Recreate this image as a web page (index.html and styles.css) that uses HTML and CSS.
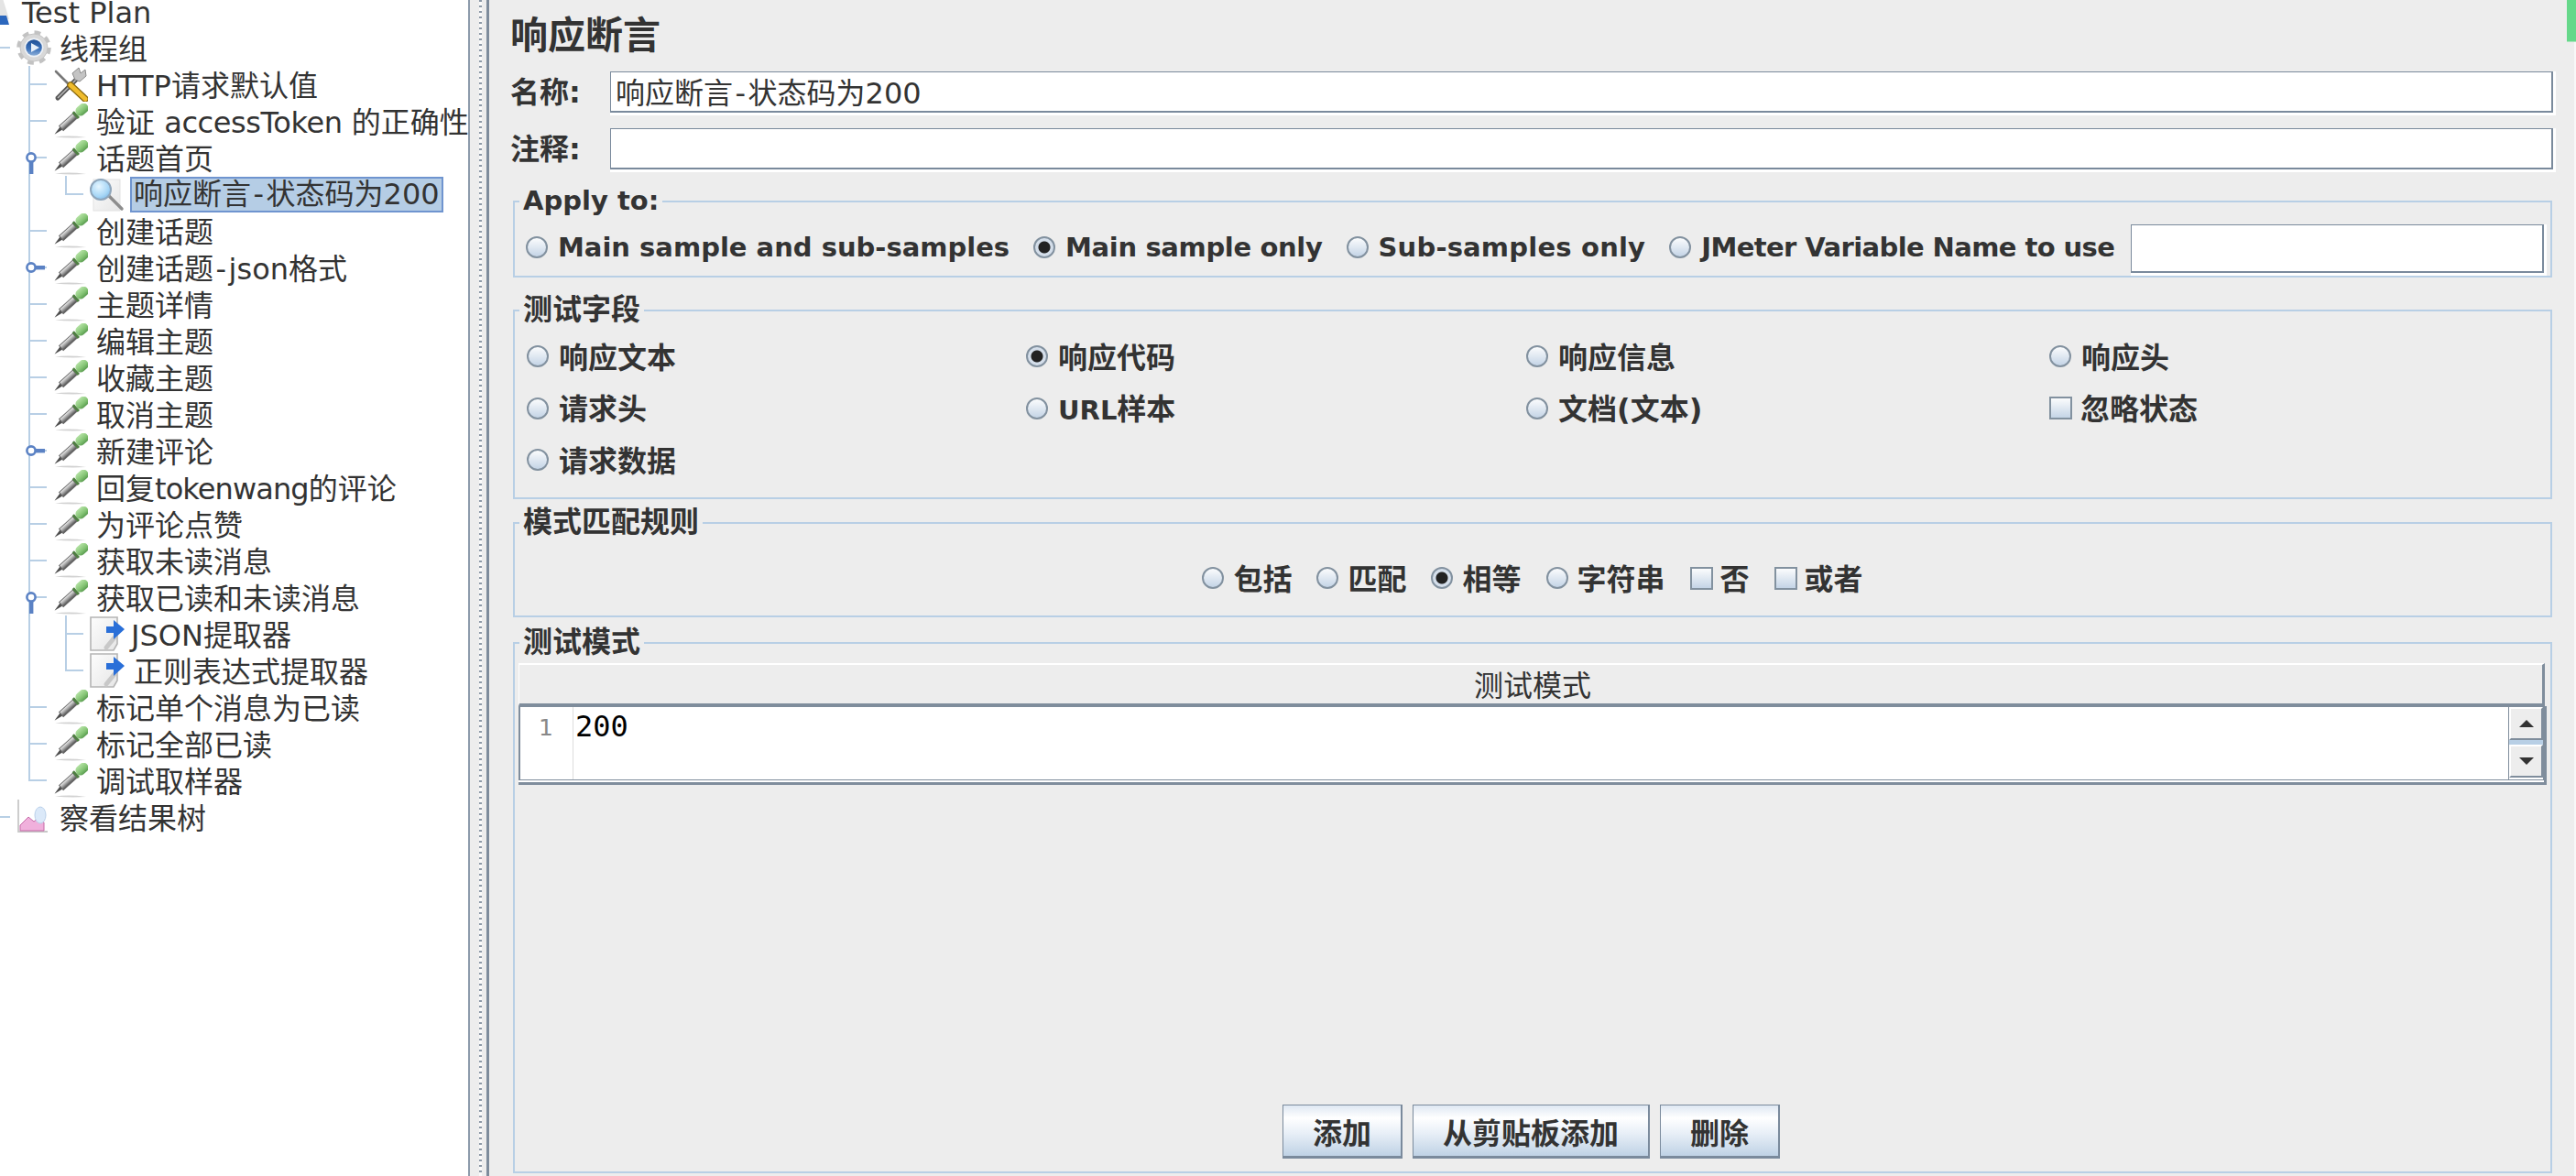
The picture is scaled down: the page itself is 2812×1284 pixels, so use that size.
FILE: index.html
```html
<!DOCTYPE html>
<html lang="zh">
<head>
<meta charset="utf-8">
<title>响应断言</title>
<link rel="stylesheet" href="styles.css">
</head>
<body>
<svg class="defs" aria-hidden="true">
  <defs>
    <linearGradient id="glass" x1="0" y1="0" x2="0" y2="1"><stop offset="0" stop-color="#f4f4f4"/><stop offset=".45" stop-color="#aaa"/><stop offset="1" stop-color="#4a4a4a"/></linearGradient>
    <linearGradient id="bulb" x1="0" y1="0" x2="0" y2="1"><stop offset="0" stop-color="#b4e2a4"/><stop offset=".6" stop-color="#84c474"/><stop offset="1" stop-color="#5a9c50"/></linearGradient>
    <radialGradient id="lens" cx=".4" cy=".35" r=".7"><stop offset="0" stop-color="#e6f6ff"/><stop offset=".7" stop-color="#a6d6f6"/><stop offset="1" stop-color="#7fb8e6"/></radialGradient>
    <linearGradient id="hub" x1="0" y1="0" x2="0" y2="1"><stop offset="0" stop-color="#1e4f96"/><stop offset=".6" stop-color="#3f74bb"/><stop offset="1" stop-color="#8fb0d8"/></linearGradient>
    <linearGradient id="sheet" x1="0" y1="0" x2="1" y2="1"><stop offset="0" stop-color="#fdfdfd"/><stop offset="1" stop-color="#e6e6e6"/></linearGradient>
    <symbol id="i-dropper" viewBox="0 0 38 38">
      <path d="M2 36.5Q18 34.5 36 37Q18 38 2 36.5Z" fill="#d2d2d2"/>
      <g transform="translate(20 17) rotate(-42)">
        <path d="M-25 0L-15-2V2Z" fill="#4c4c4c"/>
        <rect x="-15" y="-3.4" width="20" height="6.8" fill="url(#glass)" stroke="#6a6a6a"/>
        <rect x="5" y="-4.6" width="3" height="9.2" fill="#4f7f42"/>
        <rect x="8" y="-5.4" width="15" height="10.8" rx="5" fill="url(#bulb)"/>
      </g>
    </symbol>
    <symbol id="i-tools" viewBox="0 0 38 38">
      <path d="M3 5L20 22" stroke="#777" stroke-width="2.6" stroke-linecap="round"/>
      <path d="M5 34L26 13" stroke="#555" stroke-width="5" stroke-linecap="round"/>
      <path d="M5 34L26 13" stroke="#b8b8b8" stroke-width="1.6"/>
      <path d="M24 14L21 7L28 1L30 7L35 3L36 10L29 16Z" fill="#c4c4c4" stroke="#8a8a8a"/>
      <path d="M19 20L35 35" stroke="#8a6a10" stroke-width="7.5" stroke-linecap="round"/>
      <path d="M19 20L35 35" stroke="#f0bc2c" stroke-width="5" stroke-linecap="round"/>
    </symbol>
    <symbol id="i-gear" viewBox="0 0 38 38">
      <circle cx="19" cy="19" r="16" fill="none" stroke="#c2c2c2" stroke-width="5.5" stroke-dasharray="6.5 6.07"/>
      <circle cx="19" cy="19" r="15" fill="#d8d8d8" stroke="#c4c4c4"/>
      <circle cx="19" cy="19" r="10.5" fill="#eef2f7"/>
      <circle cx="19" cy="19" r="8.8" fill="url(#hub)"/>
      <path d="M16 14L25 19L16 24Z" fill="#e8f0fa"/>
    </symbol>
    <symbol id="i-search" viewBox="0 0 38 38">
      <rect x="4" y="3" width="29" height="34" fill="url(#sheet)" stroke="#e2e2e2"/>
      <path d="M20 20L35 35" stroke="#8d8d8d" stroke-width="3.4" stroke-linecap="round"/>
      <circle cx="12" cy="14" r="11" fill="url(#lens)" stroke="#8fa6bb" stroke-width="2"/>
    </symbol>
    <symbol id="i-extract" viewBox="0 0 38 38">
      <path d="M1 1H30V30L26 37H1Z" fill="url(#sheet)" stroke="#b5b5b5" stroke-width="1.6"/>
      <path d="M18 34L27 23" stroke="#c8c8c8" stroke-width="5" stroke-linecap="round"/>
      <path d="M18 11H26V4L38 14L26 25V18H18Z" fill="#2a6fd8"/>
    </symbol>
    <symbol id="i-graph" viewBox="0 0 38 38">
      <path d="M2 0V35H34" fill="none" stroke="#c8c8c8" stroke-width="1.8"/>
      <path d="M4 34V28L13 19L19 24L24 20L30 25V34Z" fill="#f0b0dc" stroke="#c66aa8"/>
      <ellipse cx="26" cy="17" rx="6" ry="9" fill="#dbe9f9" stroke="#b9d0ea"/>
    </symbol>
    <symbol id="i-plan" viewBox="0 0 14 34">
      <path d="M0 0H2L10 26L0 28Z" fill="#e4e4e4"/>
      <path d="M0 22L7 22L10 32H0Z" fill="#2c67bd"/>
    </symbol>
    <symbol id="h-open" viewBox="0 0 16 26">
      <circle cx="8" cy="7" r="4.6" fill="#fff" stroke="#5b82c4" stroke-width="2.6"/>
      <rect x="6" y="12" width="4.4" height="13" fill="#5b82c4"/>
    </symbol>
    <symbol id="h-closed" viewBox="0 0 22 16">
      <circle cx="7" cy="8" r="4.6" fill="#fff" stroke="#5b82c4" stroke-width="2.6"/>
      <rect x="12" y="6" width="10" height="4.4" fill="#5b82c4"/>
    </symbol>
  </defs>
</svg>

<main class="app">
  <nav class="tree">
    <div class="row root"><svg class="icon-plan"><use href="#i-plan"/></svg><span class="label">Test Plan</span></div>
    <div class="row l1"><svg class="icon"><use href="#i-gear"/></svg><span class="label">线程组</span></div>
    <div class="row l2"><svg class="icon"><use href="#i-tools"/></svg><span class="label">HTTP请求默认值</span></div>
    <div class="row l2"><svg class="icon"><use href="#i-dropper"/></svg><span class="label">验证 <span class="tight-a">accessToken</span> 的正确性</span></div>
    <div class="row l2"><svg class="handle-open"><use href="#h-open"/></svg><svg class="icon"><use href="#i-dropper"/></svg><span class="label">话题首页</span></div>
    <div class="row l3 end"><svg class="icon"><use href="#i-search"/></svg><span class="label selected">响应断言<span class="dash">-</span>状态码为200</span></div>
    <div class="row l2"><svg class="icon"><use href="#i-dropper"/></svg><span class="label">创建话题</span></div>
    <div class="row l2"><svg class="handle-closed"><use href="#h-closed"/></svg><svg class="icon"><use href="#i-dropper"/></svg><span class="label">创建话题<span class="dash">-</span>json格式</span></div>
    <div class="row l2"><svg class="icon"><use href="#i-dropper"/></svg><span class="label">主题详情</span></div>
    <div class="row l2"><svg class="icon"><use href="#i-dropper"/></svg><span class="label">编辑主题</span></div>
    <div class="row l2"><svg class="icon"><use href="#i-dropper"/></svg><span class="label">收藏主题</span></div>
    <div class="row l2"><svg class="icon"><use href="#i-dropper"/></svg><span class="label">取消主题</span></div>
    <div class="row l2"><svg class="handle-closed"><use href="#h-closed"/></svg><svg class="icon"><use href="#i-dropper"/></svg><span class="label">新建评论</span></div>
    <div class="row l2"><svg class="icon"><use href="#i-dropper"/></svg><span class="label">回复<span class="tight-b">tokenwang</span>的评论</span></div>
    <div class="row l2"><svg class="icon"><use href="#i-dropper"/></svg><span class="label">为评论点赞</span></div>
    <div class="row l2"><svg class="icon"><use href="#i-dropper"/></svg><span class="label">获取未读消息</span></div>
    <div class="row l2"><svg class="handle-open"><use href="#h-open"/></svg><svg class="icon"><use href="#i-dropper"/></svg><span class="label">获取已读和未读消息</span></div>
    <div class="row l3"><svg class="icon"><use href="#i-extract"/></svg><span class="label json">JSON提取器</span></div>
    <div class="row l3 end"><svg class="icon"><use href="#i-extract"/></svg><span class="label regex">正则表达式提取器</span></div>
    <div class="row l2"><svg class="icon"><use href="#i-dropper"/></svg><span class="label">标记单个消息为已读</span></div>
    <div class="row l2"><svg class="icon"><use href="#i-dropper"/></svg><span class="label">标记全部已读</span></div>
    <div class="row l2 end"><svg class="icon"><use href="#i-dropper"/></svg><span class="label">调试取样器</span></div>
    <div class="row l1"><svg class="icon"><use href="#i-graph"/></svg><span class="label">察看结果树</span></div>
  </nav>

  <div class="splitter"></div>

  <section class="panel">
    <h1 class="title">响应断言</h1>
    <div class="field"><span class="field-label">名称:</span><div class="input">响应断言<span class="dash">-</span>状态码为200</div></div>
    <div class="field second"><span class="field-label">注释:</span><div class="input"></div></div>

    <div class="group g-apply">
      <div class="legend en">Apply to:</div>
      <div class="apply-row">
        <label class="opt"><i class="radio"></i><span class="en">Main sample and sub-samples</span></label>
        <label class="opt"><i class="radio on"></i><span class="en narrow-a">Main sample only</span></label>
        <label class="opt"><i class="radio"></i><span class="en wide-a">Sub-samples only</span></label>
        <label class="opt"><i class="radio"></i><span class="en narrow-b">JMeter Variable Name to use</span></label>
        <div class="input var"></div>
      </div>
    </div>

    <div class="group g-field">
      <div class="legend">测试字段</div>
      <div class="field-grid">
        <label class="opt"><i class="radio"></i><span>响应文本</span></label>
        <label class="opt"><i class="radio on"></i><span>响应代码</span></label>
        <label class="opt"><i class="radio"></i><span>响应信息</span></label>
        <label class="opt"><i class="radio"></i><span>响应头</span></label>
        <label class="opt"><i class="radio"></i><span>请求头</span></label>
        <label class="opt"><i class="radio"></i><span><span class="en">URL</span>样本</span></label>
        <label class="opt"><i class="radio"></i><span>文档(文本)</span></label>
        <label class="opt"><i class="check"></i><span>忽略状态</span></label>
        <label class="opt"><i class="radio"></i><span>请求数据</span></label>
      </div>
    </div>

    <div class="group g-rule">
      <div class="legend">模式匹配规则</div>
      <div class="rule-row">
        <label class="opt"><i class="radio"></i><span>包括</span></label>
        <label class="opt"><i class="radio"></i><span>匹配</span></label>
        <label class="opt"><i class="radio on"></i><span>相等</span></label>
        <label class="opt"><i class="radio"></i><span>字符串</span></label>
        <label class="opt"><i class="check"></i><span>否</span></label>
        <label class="opt"><i class="check"></i><span>或者</span></label>
      </div>
    </div>

    <div class="group g-pattern">
      <div class="legend">测试模式</div>
      <div class="table-head">测试模式</div>
      <div class="editor">
        <div class="editor-inner">
          <div class="gutter">1</div>
          <div class="code">200</div>
          <div class="scrollbar">
            <div class="scroll-btn"><i class="tri-up"></i></div>
            <div class="scroll-gap"></div>
            <div class="scroll-btn"><i class="tri-down"></i></div>
          </div>
        </div>
      </div>
      <div class="actions">
        <button class="btn" type="button">添加</button>
        <button class="btn wide" type="button">从剪贴板添加</button>
        <button class="btn" type="button">删除</button>
      </div>
    </div>
  </section>

  <div class="edge"><div class="edge-mark"></div></div>
</main>
</body>
</html>
```

FILE: styles.css
```css
* { box-sizing: border-box; }
html, body { margin: 0; height: 1284px; width: 2812px; overflow: hidden; }
body { font-family: "DejaVu Sans", "Noto Sans CJK SC", sans-serif; font-size: 32px; color: #333; background: #ededed; }
.defs { position: absolute; width: 0; height: 0; }

.app { display: flex; height: 1284px; }

/* Tree */
.tree { width: 511px; flex: none; height: 1284px; background: #fff; overflow: hidden; }
.tree > .row:first-child { margin-top: -8px; }
.row { position: relative; display: flex; align-items: center; height: 40px; white-space: nowrap; background-repeat: no-repeat; }
.icon { width: 38px; height: 38px; flex: none; }
.label { margin-left: 9px; line-height: 40px; padding-top: 3px; }
.root { padding-left: 0; }
.root .label { margin-left: 10px; }
.icon-plan { width: 14px; height: 34px; flex: none; }
.l1 { padding-left: 18px;
  background-image: linear-gradient(#b8cfe5, #b8cfe5);
  background-position: 0 19px; background-size: 11px 2px; }
.l2 { padding-left: 58px;
  background-image: linear-gradient(#b8cfe5, #b8cfe5), linear-gradient(#b8cfe5, #b8cfe5);
  background-position: 31px 0, 31px 19px; background-size: 2px 100%, 20px 2px; }
.l2.end { background-size: 2px 21px, 20px 2px; }
.l3 { padding-left: 98px;
  background-image: linear-gradient(#b8cfe5, #b8cfe5), linear-gradient(#b8cfe5, #b8cfe5), linear-gradient(#b8cfe5, #b8cfe5);
  background-position: 31px 0, 71px 0, 71px 19px; background-size: 2px 100%, 2px 100%, 20px 2px; }
.l3.end { background-size: 2px 100%, 2px 21px, 20px 2px; }
.handle-open { position: absolute; left: 26px; top: 13px; width: 16px; height: 26px; }
.handle-closed { position: absolute; left: 27px; top: 12px; width: 22px; height: 16px; }
.selected { margin-left: 6px; height: 39px; line-height: 35px; padding: 0 2px 0 2px; background: #b5cde5; border: 2px solid #6f94cf; }
.json { margin-left: 7px; }
.regex { margin-left: 10px; }
.tight-a { letter-spacing: -.4px; }
.tight-b { letter-spacing: -.9px; }
.dash { margin: 0 2.5px; }

/* Splitter */
.splitter { width: 23px; flex: none; border-left: 2px solid #8d9bab; border-right: 3px solid #7e8c9c; background-color: #ededed;
  background-image: repeating-linear-gradient(to bottom, #8c98a6 0 2px, #fafafa 2px 6px);
  background-position: 10px 0; background-size: 3px 100%; background-repeat: no-repeat; }

/* Panel */
.panel { flex: 1; min-width: 0; height: 1284px; padding: 0 24px 3px 26px; display: flex; flex-direction: column; }
.title { margin: 0 0 0 -3px; height: 78px; font-size: 41px; line-height: 78px; font-weight: 700; }
.field { display: flex; height: 48px; margin: 0 -1px 0 -3px; flex: none; }
.field.second { margin-top: 14px; margin-bottom: 31px; }
.field-label { width: 109px; flex: none; font-weight: 700; line-height: 46px; }
.input { flex: 1; height: 45px; line-height: 46px; padding-left: 5px; background: #fff;
  border-style: solid; border-color: #7a8a9c; border-width: 1px 2px 2px 1px;
  box-shadow: 3px 0 0 #fff, 0 3px 0 #fff, 3px 3px 0 #fff; white-space: nowrap; }

/* Groups */
.group { border: 2px solid #b8cfe5; flex: none; }
.legend { width: fit-content; height: 36px; margin: -20px 0 0 5px; padding: 0 4px; line-height: 36px; font-weight: 700; background: #ededed; }
.en { font-size: 29px; font-weight: 700; }
.narrow-a { letter-spacing: -.35px; }
.wide-a { letter-spacing: .2px; }
.narrow-b { letter-spacing: -.6px; }
.g-apply { height: 84px; margin-bottom: 35px; }
.g-field { height: 207px; margin-bottom: 25px; }
.g-rule { height: 104px; margin-bottom: 27px; }
.g-pattern { flex: 1; min-height: 0; display: flex; flex-direction: column; padding: 0 4px 14px; }
.g-pattern .legend { margin-left: 1px; }

.opt { display: flex; align-items: center; height: 40px; gap: 11px; font-weight: 700; white-space: nowrap; flex: none; }
.radio { display: block; flex: none; width: 24px; height: 24px; border-radius: 50%; border: 2px solid #82919f;
  background: linear-gradient(#fbfcfd, #c4d4e6); }
.radio.on { background: radial-gradient(circle, #222 0 6px, #d4deea 7px); }
.check { display: block; flex: none; width: 25px; height: 25px; margin-right: -2px; border: 2px solid #82919f; background: linear-gradient(#fbfcfd, #c4d4e6); }

.apply-row { display: flex; align-items: center; gap: 26px; margin-top: 13px; padding: 0 7px 0 12px; height: 40px; }
.input.var { height: 53px; flex: 1; margin-left: -8px; margin-top: 3px; }

.field-grid { display: grid; grid-template-columns: 545px 546px 571px 1fr; grid-auto-rows: 56.5px; margin-top: 5px; padding-left: 13px; align-items: center; }
.field-grid .opt > span, .rule-row .opt > span { padding-bottom: 3px; }
.rule-row { display: flex; justify-content: center; align-items: center; gap: 27px; margin-top: 23px; height: 40px; }
.rule-row .opt { gap: 10px; }

.table-head { margin-top: 5px; height: 47px; flex: none; padding-left: 4px; text-align: center; line-height: 46px; background: #ededed;
  border-style: solid; border-color: #fff #7f8d9c #7f8d9c #fff; border-width: 2px 3px 3px 1px; margin-right: 2px; }
.editor { height: 86px; flex: none; background: #fff; border-right: 3px solid #7f8d9c; border-bottom: 3px solid #7f8d9c; padding-bottom: 2px; }
.editor-inner { display: flex; height: 81px; border: 1px solid #7f8d9c; border-left-width: 2px; background: #fff; }
.gutter { width: 58px; flex: none; border-right: 1px solid #ddd; text-align: right; padding-right: 21px; color: #888; font-size: 25px; line-height: 46px; }
.code { flex: 1; padding-left: 2px; font-family: "DejaVu Sans Mono", monospace; font-size: 32px; line-height: 42px; color: #000; }
.scrollbar { width: 38px; flex: none; display: flex; flex-direction: column; border-left: 1px solid #7f8d9c; }
.scroll-btn { height: 36px; flex: none; display: flex; align-items: center; justify-content: center; background: #ededed;
  border-style: solid; border-color: #fff #7f8d9c #7f8d9c #fff; border-width: 2px; }
.scroll-gap { height: 5px; flex: none; background: #b8cfe5; }
.tri-up, .tri-down { display: block; width: 0; height: 0; border-left: 8px solid transparent; border-right: 8px solid transparent; }
.tri-up { border-bottom: 8px solid #333; }
.tri-down { border-top: 8px solid #333; }

.actions { margin-top: auto; padding-right: 3px; display: flex; justify-content: center; gap: 11px; }
.btn { width: 131px; height: 59px; padding: 0; font: 700 32px "DejaVu Sans", "Noto Sans CJK SC", sans-serif; color: #333;
  background: linear-gradient(#dfe8f3, #fff 25%, #e8eff7 55%, #bfd2e5);
  border-style: solid; border-color: #7a8a9c; border-width: 1px 2px 3px 1px; }
.btn.wide { width: 259px; }

/* Right edge */
.edge { position: relative; width: 2px; flex: none; background: #f8f8f8; }
.edge-mark { position: absolute; right: 0; top: 0; width: 10px; height: 46px; background: #66d88a; border-bottom: 1px solid #a9e6bd; }
```
